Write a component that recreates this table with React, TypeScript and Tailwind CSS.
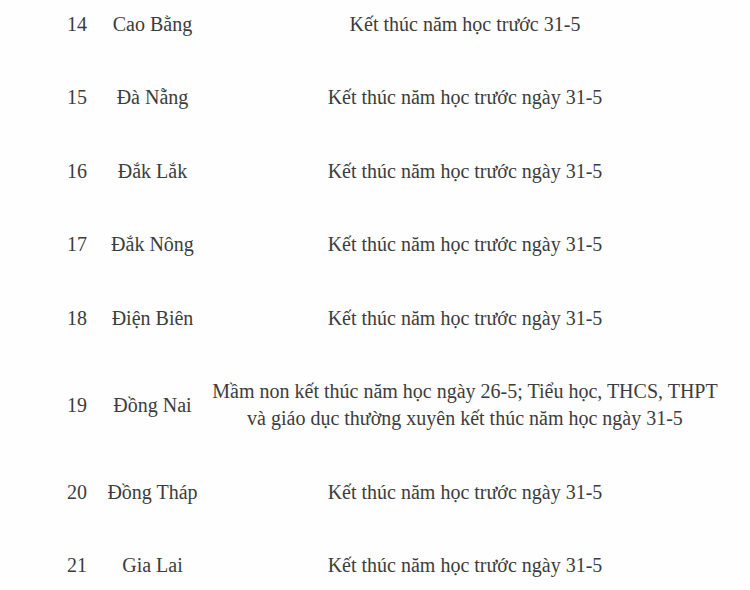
const rows = [
  { no: '14', name: 'Cao Bằng', text: ['Kết thúc năm học trước 31-5'] },
  { no: '15', name: 'Đà Nẵng', text: ['Kết thúc năm học trước ngày 31-5'] },
  { no: '16', name: 'Đắk Lắk', text: ['Kết thúc năm học trước ngày 31-5'] },
  { no: '17', name: 'Đắk Nông', text: ['Kết thúc năm học trước ngày 31-5'] },
  { no: '18', name: 'Điện Biên', text: ['Kết thúc năm học trước ngày 31-5'] },
  {
    no: '19',
    name: 'Đồng Nai',
    text: [
      'Mầm non kết thúc năm học ngày 26-5; Tiểu học, THCS, THPT',
      'và giáo dục thường xuyên kết thúc năm học ngày 31-5',
    ],
  },
  { no: '20', name: 'Đồng Tháp', text: ['Kết thúc năm học trước ngày 31-5'] },
  { no: '21', name: 'Gia Lai', text: ['Kết thúc năm học trước ngày 31-5'] },
];

export default function App() {
  return (
    <div className="w-[750px] h-[590px] overflow-hidden bg-[#fefefe] text-[#3c3c3c] font-['Liberation_Serif','Times_New_Roman',serif] text-[20px] leading-[27px]">
      <div className="-mt-[12.75px] pl-[52px]">
        {rows.map((row) => (
          <div key={row.no} className="grid grid-cols-[50px_101px_524px] items-center py-[23.25px]">
            <div className="text-center">{row.no}</div>
            <div className="text-center whitespace-nowrap">{row.name}</div>
            <div className="text-center whitespace-nowrap">
              {row.text.map((line) => (
                <div key={line}>{line}</div>
              ))}
            </div>
          </div>
        ))}
      </div>
    </div>
  );
}
